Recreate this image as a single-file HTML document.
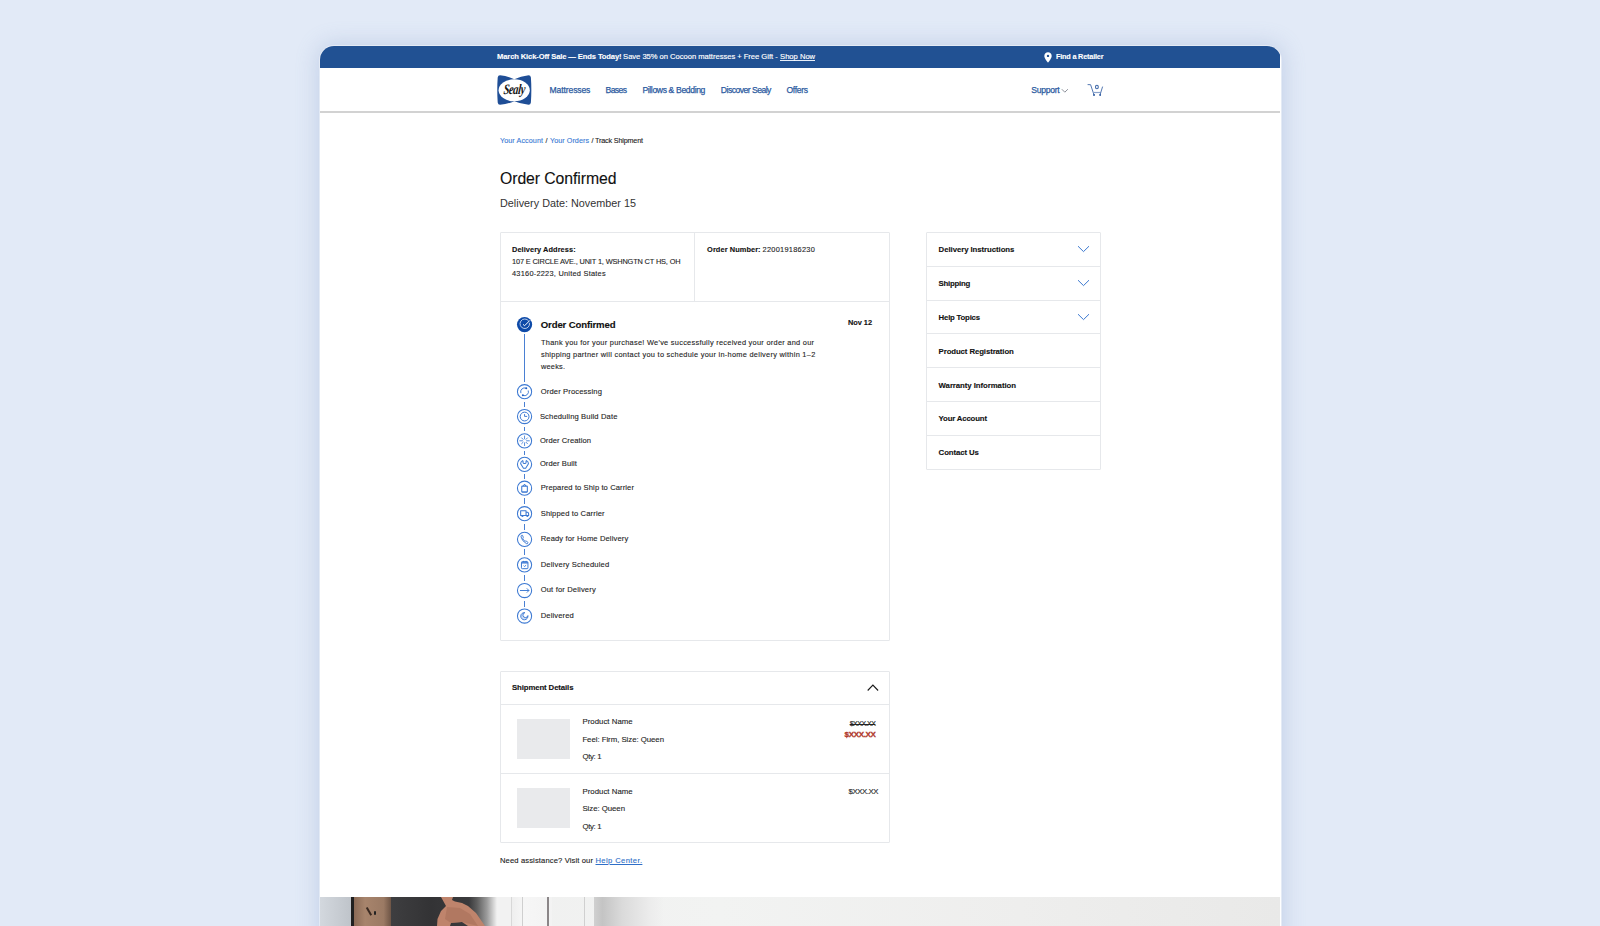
<!DOCTYPE html>
<html><head><meta charset="utf-8">
<style>
*{box-sizing:border-box;margin:0;padding:0}
html,body{width:1600px;height:926px;overflow:hidden}
body{background:#e2eaf7;font-family:"Liberation Sans",sans-serif;position:relative;color:#111}
.tx{position:absolute;white-space:nowrap;line-height:1.117;-webkit-text-stroke-width:0.12px}
.ab{position:absolute}
#frame{position:absolute;left:320px;top:46px;width:960.6px;height:900px;background:#fff;border-radius:14px 14px 0 0;overflow:hidden;box-shadow:0 0 0 1px rgba(255,255,255,.42),0 0 22px 2px rgba(120,145,195,.30)}
.bd{position:absolute;background:#e6e8eb}
</style></head>
<body>
<div id="frame">
  <div class="ab" style="left:0;top:0;width:960px;height:21.5px;background:#215193"></div>
  <div class="ab" style="left:0;top:65px;width:960px;height:1.8px;background:#d2d2d2"></div>
  <!-- bottom image -->
  <div class="ab" style="left:0;top:851px;width:960px;height:60px;background:linear-gradient(90deg,#eeeeee 0px,#f2f3f2 400px,#eeeeed 700px,#e9e9e8 960px)"></div>
  <div class="ab" style="left:0;top:851px;width:31px;height:60px;background:linear-gradient(90deg,#d3d8de,#bfc4ca)"></div>
  <div class="ab" style="left:31px;top:851px;width:3px;height:60px;background:#202020"></div>
  <div class="ab" style="left:34px;top:851px;width:37px;height:60px;background:linear-gradient(90deg,#8a6a56,#a7846c 30%,#9b7a64 80%,#6e5546)"></div>
  <div class="ab" style="left:48px;top:861px;width:1.5px;height:9px;background:#3a2a22;transform:rotate(-30deg)"></div>
  <div class="ab" style="left:54px;top:865px;width:2px;height:4px;background:#222;border-radius:1px"></div>
  <div class="ab" style="left:71px;top:851px;width:120px;height:60px;background:linear-gradient(90deg,#3e3e40 0px,#333335 40px,#3a3a3c 78px,#5e5e5e 86px,#9c9c9c 96px,#d8d8d8 103px,#f2f2f2 106px)"></div>
  <svg class="ab" style="left:0;top:851px" width="200" height="40" viewBox="0 0 200 40"><polygon points="121,0 133,0 132,3 135,4.5 142,6 148,9 156,16 165,29 148,29 142,25 131,26 130,29 117,29 117.5,22 121,14 126,9" fill="#bf846c"/><polygon points="127,10 140,11 150,17 158,29 142,25 131,26 125,22" fill="#a8705a" opacity="0.6"/></svg>
  <div class="ab" style="left:191px;top:851px;width:41px;height:60px;background:linear-gradient(90deg,#eeeeee,#f6f6f6 30%,#f3f3f3)"></div>
  <div class="ab" style="left:191px;top:851px;width:1px;height:60px;background:#d8d8d8"></div>
  <div class="ab" style="left:202px;top:851px;width:1px;height:60px;background:#cfcfcf"></div>
  <div class="ab" style="left:227px;top:851px;width:2px;height:60px;background:#8b8688"></div>
  <div class="ab" style="left:264px;top:851px;width:1px;height:60px;background:#d0d0d0"></div>
  <div class="ab" style="left:274px;top:851px;width:70px;height:60px;background:linear-gradient(90deg,#d0d0d0,#c4c4c4 12%,#dadada 40%,#ececec 80%,rgba(240,241,240,0))"></div>
</div>
<!-- logo -->
<svg class="ab" style="left:496px;top:74px" width="37" height="32" viewBox="0 0 37 32">
  <path d="M4,1.2 Q2,1.2 1.7,3.5 Q0.8,16 1.7,28.5 Q2,30.8 4,30.8 Q12,30 18.3,27.3 Q24.6,30 32.6,30.8 Q34.6,30.8 34.9,28.5 Q35.8,16 34.9,3.5 Q34.6,1.2 32.6,1.2 Q24.6,2 18.3,5.3 Q12,2 4,1.2 Z" fill="#1f4e96"/>
  <ellipse cx="18.2" cy="16.3" rx="15.6" ry="11" fill="#fff"/>
  <g transform="translate(17.8,20.2) scale(0.73,1) skewX(-8)"><text x="0" y="0" text-anchor="middle" font-family="Liberation Serif" font-style="italic" font-weight="bold" font-size="14.5" fill="#151515" style="letter-spacing:-0.6px">Sealy</text></g>
</svg>
<!-- pin -->
<svg class="ab" style="left:1043.5px;top:51.5px" width="8" height="11" viewBox="0 0 8 11">
  <path d="M4,0.3 C1.9,0.3 0.3,1.9 0.3,3.9 C0.3,6.3 4,10.6 4,10.6 C4,10.6 7.7,6.3 7.7,3.9 C7.7,1.9 6.1,0.3 4,0.3 Z" fill="#fff"/>
  <circle cx="4" cy="3.9" r="1.2" fill="#215193"/>
</svg>
<!-- support chevron -->
<svg class="ab" style="left:1061px;top:88px" width="8" height="6" viewBox="0 0 8 6"><path d="M0.8,1.2 L3.8,4.2 L6.9,1.2" fill="none" stroke="#80858f" stroke-width="0.9"/></svg>
<!-- cart -->
<svg class="ab" style="left:1087px;top:83px" width="17" height="14" viewBox="0 0 17 14">
  <path d="M0.6,1.6 L3.6,1.7 L6.9,11.6" fill="none" stroke="#4a70ad" stroke-width="0.95"/>
  <path d="M6.4,9.5 L13.5,9.5" stroke="#8aa3cc" stroke-width="1.2"/>
  <path d="M15.6,3.6 L13.2,11.4" fill="none" stroke="#4a70ad" stroke-width="0.95"/>
  <rect x="6.1" y="11" width="1.8" height="1.9" fill="#3d67a8"/><rect x="12.3" y="11" width="1.7" height="1.9" fill="#3d67a8"/>
  <ellipse cx="9.9" cy="4" rx="1.4" ry="1.8" fill="none" stroke="#3d67a8" stroke-width="1.1"/>
</svg>
<!-- card 1 -->
<div class="ab" style="left:499.5px;top:231.5px;width:390.5px;height:409px;border:1px solid #e6e8eb;border-radius:1px"></div>
<div class="bd" style="left:694px;top:232px;width:1px;height:69px"></div>
<div class="bd" style="left:500px;top:300.8px;width:389px;height:1px"></div>
<!-- sidebar -->
<div class="ab" style="left:926px;top:232px;width:175px;height:238px;border:1px solid #e6e8eb;border-radius:1px"></div>
<div class="bd" style="left:927px;top:265.6px;width:173px;height:1px"></div>
<div class="bd" style="left:927px;top:299.5px;width:173px;height:1px"></div>
<div class="bd" style="left:927px;top:333.4px;width:173px;height:1px"></div>
<div class="bd" style="left:927px;top:367.3px;width:173px;height:1px"></div>
<div class="bd" style="left:927px;top:401.2px;width:173px;height:1px"></div>
<div class="bd" style="left:927px;top:435.1px;width:173px;height:1px"></div>
<svg class="ab" style="left:1077px;top:245px" width="13" height="8" viewBox="0 0 13 8"><path d="M1,1.2 L6.5,6.6 L12,1.2" fill="none" stroke="#3a78d0" stroke-width="1"/></svg>
<svg class="ab" style="left:1077px;top:278.9px" width="13" height="8" viewBox="0 0 13 8"><path d="M1,1.2 L6.5,6.6 L12,1.2" fill="none" stroke="#3a78d0" stroke-width="1"/></svg>
<svg class="ab" style="left:1077px;top:312.8px" width="13" height="8" viewBox="0 0 13 8"><path d="M1,1.2 L6.5,6.6 L12,1.2" fill="none" stroke="#3a78d0" stroke-width="1"/></svg>
<!-- shipment -->
<div class="ab" style="left:499.5px;top:671px;width:390.5px;height:172px;border:1px solid #e6e8eb;border-radius:1px"></div>
<div class="bd" style="left:500px;top:704px;width:389px;height:1px"></div>
<div class="bd" style="left:500px;top:773px;width:389px;height:1px"></div>
<svg class="ab" style="left:866px;top:683px" width="13" height="9" viewBox="0 0 13 9"><path d="M1.7,7.5 L6.9,2.1 L12.1,7.5" fill="none" stroke="#1a1a1a" stroke-width="1.1"/></svg>
<div class="ab" style="left:517px;top:719.4px;width:53px;height:40px;background:#e9eaec"></div>
<div class="ab" style="left:517px;top:788.2px;width:53px;height:40px;background:#e9eaec"></div>
<div class="ab" style="left:780px;top:60.2px;width:35.2px;height:0.8px;background:#e8eef7"></div>
<div class="ab" style="left:524px;top:334px;width:1.3px;height:48px;background:#4a80d3"></div>
<div class="ab" style="left:524px;top:401.80px;width:1.3px;height:5.40px;background:#4a80d3"></div>
<div class="ab" style="left:524px;top:426.60px;width:1.3px;height:4.90px;background:#4a80d3"></div>
<div class="ab" style="left:524px;top:450.90px;width:1.3px;height:4.10px;background:#4a80d3"></div>
<div class="ab" style="left:524px;top:474.40px;width:1.3px;height:4.50px;background:#4a80d3"></div>
<div class="ab" style="left:524px;top:498.30px;width:1.3px;height:6.10px;background:#4a80d3"></div>
<div class="ab" style="left:524px;top:523.80px;width:1.3px;height:6.20px;background:#4a80d3"></div>
<div class="ab" style="left:524px;top:549.40px;width:1.3px;height:6.10px;background:#4a80d3"></div>
<div class="ab" style="left:524px;top:574.90px;width:1.3px;height:6.30px;background:#4a80d3"></div>
<div class="ab" style="left:524px;top:600.60px;width:1.3px;height:6.10px;background:#4a80d3"></div>
<svg class="ab" style="left:515px;top:315px" width="19" height="19" viewBox="0 0 19 19"><g transform="translate(0.55,0.55)"><circle cx="9" cy="9" r="7.6" fill="#0e4aa8"/><path d="M13.2,5.6 A4.75,4.75 0 1 0 13.9,7.3" fill="none" stroke="#dfe8f8" stroke-width="0.8"/><path d="M7.5,8.8 L9,10.2 L14.3,4.9" fill="none" stroke="#fff" stroke-width="1.0"/></g></svg>
<svg class="ab" style="left:515px;top:382px" width="19" height="19" viewBox="0 0 19 19"><g transform="translate(0.55,0.70)"><circle cx="9" cy="9" r="7.1" fill="none" stroke="#3b78d2" stroke-width="1.05"/><path d="M5.34,10.43 A3.9,3.9 0 0 1 10.65,5.57" fill="none" stroke="#3b78d2" stroke-width="0.95"/><path d="M12.66,7.77 A3.9,3.9 0 0 1 7.35,12.63" fill="none" stroke="#3b78d2" stroke-width="0.95"/><circle cx="10.7" cy="5.6" r="1.0" fill="#1f5fc4"/><circle cx="7.3" cy="12.6" r="1.0" fill="#1f5fc4"/></g></svg>
<svg class="ab" style="left:515px;top:407px" width="19" height="19" viewBox="0 0 19 19"><g transform="translate(0.55,0.50)"><circle cx="9" cy="9" r="7.1" fill="none" stroke="#3b78d2" stroke-width="1.05"/><circle cx="9.05" cy="9.05" r="4.4" fill="none" stroke="#3b78d2" stroke-width="1"/><path d="M9,6.6 V8.9 H11.6" fill="none" stroke="#3b78d2" stroke-width="0.95"/></g></svg>
<svg class="ab" style="left:515px;top:431px" width="19" height="19" viewBox="0 0 19 19"><g transform="translate(0.55,0.80)"><circle cx="9" cy="9" r="7.1" fill="none" stroke="#3b78d2" stroke-width="1.05"/><line x1="11.00" y1="9.00" x2="13.80" y2="9.00" stroke="#3b78d2" stroke-width="0.85" stroke-linecap="round"/><line x1="10.48" y1="10.48" x2="11.90" y2="11.90" stroke="#3b78d2" stroke-width="0.85" stroke-linecap="round"/><line x1="9.00" y1="11.00" x2="9.00" y2="13.80" stroke="#3b78d2" stroke-width="0.85" stroke-linecap="round"/><line x1="7.52" y1="10.48" x2="6.10" y2="11.90" stroke="#3b78d2" stroke-width="0.85" stroke-linecap="round"/><line x1="7.00" y1="9.00" x2="4.20" y2="9.00" stroke="#3b78d2" stroke-width="0.85" stroke-linecap="round"/><line x1="7.52" y1="7.52" x2="6.10" y2="6.10" stroke="#3b78d2" stroke-width="0.85" stroke-linecap="round"/><line x1="9.00" y1="7.00" x2="9.00" y2="4.20" stroke="#3b78d2" stroke-width="0.85" stroke-linecap="round"/><line x1="10.48" y1="7.52" x2="11.90" y2="6.10" stroke="#3b78d2" stroke-width="0.85" stroke-linecap="round"/></g></svg>
<svg class="ab" style="left:515px;top:455px" width="19" height="19" viewBox="0 0 19 19"><g transform="translate(0.55,0.30)"><circle cx="9" cy="9" r="7.1" fill="none" stroke="#3b78d2" stroke-width="1.05"/><path d="M7,5.3 L7.5,5.9 L7.5,7.3 Q7.5,8.1 8.3,8.1 L9.7,8.1 Q10.5,8.1 10.5,7.3 L10.5,5.9 L11,5.3 Q12.9,6.3 12.9,8.5 L10.1,12.9 L7.9,12.9 L5.1,8.5 Q5.1,6.3 7,5.3 Z" fill="none" stroke="#3b78d2" stroke-width="1.05" stroke-linejoin="round"/></g></svg>
<svg class="ab" style="left:515px;top:479px" width="19" height="19" viewBox="0 0 19 19"><g transform="translate(0.55,0.20)"><circle cx="9" cy="9" r="7.1" fill="none" stroke="#3b78d2" stroke-width="1.05"/><rect x="6.2" y="6.9" width="5.6" height="6" rx="0.5" fill="none" stroke="#3b78d2" stroke-width="1.05"/><path d="M7.7,6.9 L9,4.9 L10.3,6.9" fill="none" stroke="#3b78d2" stroke-width="1" stroke-linejoin="round"/><path d="M6.2,12.5 H11.8" stroke="#3b78d2" stroke-width="0.8" opacity="0.6"/></g></svg>
<svg class="ab" style="left:515px;top:504px" width="19" height="19" viewBox="0 0 19 19"><g transform="translate(0.55,0.70)"><circle cx="9" cy="9" r="7.1" fill="none" stroke="#3b78d2" stroke-width="1.05"/><path d="M5.1,6 H10.5 V10.8 H5.1 Z M10.5,7.6 H12 Q13.1,8 13.1,9.3 V10.8 H10.5" fill="none" stroke="#3b78d2" stroke-width="1.05" stroke-linejoin="round"/><circle cx="6.9" cy="11.3" r="1.05" fill="#3b78d2"/><circle cx="11.8" cy="11.3" r="1.05" fill="#3b78d2"/></g></svg>
<svg class="ab" style="left:515px;top:530px" width="19" height="19" viewBox="0 0 19 19"><g transform="translate(0.55,0.30)"><circle cx="9" cy="9" r="7.1" fill="none" stroke="#3b78d2" stroke-width="1.05"/><path d="M6.3,4.9 Q5.4,5.2 5.5,6.6 Q6.2,10.5 10.8,13.3 Q12.1,13.8 12.4,12.6 Q12.5,11.9 11.8,11.5 L10.6,10.8 Q10,10.5 9.5,11 Q7.8,10 7.2,8.4 Q7.8,7.8 7.7,7.2 L7.3,5.7 Q7.1,4.7 6.3,4.9 Z" fill="none" stroke="#3b78d2" stroke-width="0.95" stroke-linejoin="round"/></g></svg>
<svg class="ab" style="left:515px;top:555px" width="19" height="19" viewBox="0 0 19 19"><g transform="translate(0.55,0.80)"><circle cx="9" cy="9" r="7.1" fill="none" stroke="#3b78d2" stroke-width="1.05"/><rect x="5.9" y="5.9" width="6.5" height="7" rx="0.9" fill="none" stroke="#3b78d2" stroke-width="1"/><rect x="5.9" y="5.9" width="6.5" height="1.9" fill="#3b78d2" opacity="0.85"/><circle cx="7.9" cy="5.6" r="0.6" fill="#3b78d2"/><circle cx="10.5" cy="5.6" r="0.6" fill="#3b78d2"/><path d="M8,9.9 L8.9,10.7 L10.6,9.4" fill="none" stroke="#3b78d2" stroke-width="0.95"/></g></svg>
<svg class="ab" style="left:515px;top:581px" width="19" height="19" viewBox="0 0 19 19"><g transform="translate(0.55,0.50)"><circle cx="9" cy="9" r="7.1" fill="none" stroke="#3b78d2" stroke-width="1.05"/><path d="M4.4,9 H13.4 M11.3,6.9 L13.4,9 L11.3,11.1" fill="none" stroke="#3b78d2" stroke-width="0.95"/></g></svg>
<svg class="ab" style="left:515px;top:607px" width="19" height="19" viewBox="0 0 19 19"><g transform="translate(0.55,0.00)"><circle cx="9" cy="9" r="7.1" fill="none" stroke="#3b78d2" stroke-width="1.05"/><path d="M9.4,5.65 A3.6,3.6 0 1 0 12.35,8.57 A2.5,2.5 0 1 1 9.4,5.65 Z" fill="#3b78d2" fill-opacity="0.25" stroke="#3b78d2" stroke-width="0.95" stroke-linejoin="round"/></g></svg>
<div id="t0" class="tx" style="left:497px;top:53.42px;font-size:7.6px;font-weight:bold;color:#fff;letter-spacing:-0.124px;">March Kick-Off Sale — Ends Today!</div>
<div id="t1" class="tx" style="left:623.1px;top:53.42px;font-size:7.6px;font-weight:normal;color:#fff;letter-spacing:-0.022px;-webkit-text-stroke:0.15px #fff;">Save 35% on Cocoon mattresses + Free Gift -</div>
<div id="t2" class="tx" style="left:780.1px;top:53.42px;font-size:7.6px;font-weight:normal;color:#fff;letter-spacing:-0.006px;-webkit-text-stroke:0.15px #fff;">Shop Now</div>
<div id="t3" class="tx" style="left:1056px;top:53.49px;font-size:7.3px;font-weight:bold;color:#fff;letter-spacing:-0.199px;">Find a Retailer</div>
<div id="t4" class="tx" style="left:549.6px;top:86.12px;font-size:8.6px;font-weight:normal;color:#2b5aa0;letter-spacing:-0.136px;-webkit-text-stroke:0.25px #2b5aa0;">Mattresses</div>
<div id="t5" class="tx" style="left:605.6px;top:86.12px;font-size:8.6px;font-weight:normal;color:#2b5aa0;letter-spacing:-0.621px;-webkit-text-stroke:0.25px #2b5aa0;">Bases</div>
<div id="t6" class="tx" style="left:642.4px;top:86.12px;font-size:8.6px;font-weight:normal;color:#2b5aa0;letter-spacing:-0.362px;-webkit-text-stroke:0.25px #2b5aa0;">Pillows &amp; Bedding</div>
<div id="t7" class="tx" style="left:720.8px;top:86.12px;font-size:8.6px;font-weight:normal;color:#2b5aa0;letter-spacing:-0.516px;-webkit-text-stroke:0.25px #2b5aa0;">Discover Sealy</div>
<div id="t8" class="tx" style="left:786.4px;top:86.12px;font-size:8.6px;font-weight:normal;color:#2b5aa0;letter-spacing:-0.308px;-webkit-text-stroke:0.25px #2b5aa0;">Offers</div>
<div id="t9" class="tx" style="left:1031.3px;top:86.12px;font-size:8.6px;font-weight:normal;color:#2b5aa0;letter-spacing:-0.301px;-webkit-text-stroke:0.25px #2b5aa0;">Support</div>
<div id="t10" class="tx" style="left:500px;top:137.28px;font-size:7.2px;font-weight:normal;color:#3a7bd5;letter-spacing:0.082px;">Your Account</div>
<div id="t11" class="tx" style="left:545.5px;top:137.28px;font-size:7.2px;font-weight:normal;color:#262626;letter-spacing:0.000px;">/</div>
<div id="t12" class="tx" style="left:550px;top:137.28px;font-size:7.2px;font-weight:normal;color:#3a7bd5;letter-spacing:0.052px;">Your Orders</div>
<div id="t13" class="tx" style="left:591.5px;top:137.28px;font-size:7.2px;font-weight:normal;color:#222;letter-spacing:-0.163px;">/ Track Shipment</div>
<div id="t14" class="tx" style="left:500px;top:170.10px;font-size:15.8px;font-weight:normal;color:#111;letter-spacing:-0.081px;">Order Confirmed</div>
<div id="t15" class="tx" style="left:500px;top:196.63px;font-size:10.8px;font-weight:normal;color:#333;letter-spacing:0.015px;-webkit-text-stroke-width:0;">Delivery Date: November 15</div>
<div id="t16" class="tx" style="left:512px;top:246.00px;font-size:7.4px;font-weight:bold;color:#111;letter-spacing:0.064px;">Delivery Address:</div>
<div id="t17" class="tx" style="left:512px;top:258.10px;font-size:7.4px;font-weight:normal;color:#262626;letter-spacing:-0.158px;">107 E CIRCLE AVE., UNIT 1, WSHNGTN CT HS, OH</div>
<div id="t18" class="tx" style="left:512px;top:270.10px;font-size:7.4px;font-weight:normal;color:#262626;letter-spacing:0.236px;">43160-2223, United States</div>
<div id="t19" class="tx" style="left:707.1px;top:245.70px;font-size:7.4px;font-weight:bold;color:#111;letter-spacing:0.077px;">Order Number:</div>
<div id="t20" class="tx" style="left:762.5px;top:245.70px;font-size:7.4px;font-weight:normal;color:#262626;letter-spacing:0.266px;">220019186230</div>
<div id="t21" class="tx" style="left:540.8px;top:320.01px;font-size:9.6px;font-weight:bold;color:#111;letter-spacing:-0.147px;">Order Confirmed</div>
<div id="t22" class="tx" style="left:847.9px;top:319.20px;font-size:7.4px;font-weight:bold;color:#111;letter-spacing:-0.028px;">Nov 12</div>
<div id="t23" class="tx" style="left:541px;top:339.20px;font-size:7.4px;font-weight:normal;color:#262626;letter-spacing:0.269px;">Thank you for your purchase! We've successfully received your order and our</div>
<div id="t24" class="tx" style="left:541px;top:351.30px;font-size:7.4px;font-weight:normal;color:#262626;letter-spacing:0.275px;">shipping partner will contact you to schedule your in-home delivery within 1–2</div>
<div id="t25" class="tx" style="left:541px;top:363.10px;font-size:7.4px;font-weight:normal;color:#262626;letter-spacing:0.197px;">weeks.</div>
<div id="t26" class="tx" style="left:540.7px;top:388.12px;font-size:7.6px;font-weight:normal;color:#262626;letter-spacing:0.141px;">Order Processing</div>
<div id="t27" class="tx" style="left:539.9px;top:412.82px;font-size:7.6px;font-weight:normal;color:#262626;letter-spacing:0.139px;">Scheduling Build Date</div>
<div id="t28" class="tx" style="left:539.9px;top:436.92px;font-size:7.6px;font-weight:normal;color:#262626;letter-spacing:0.067px;">Order Creation</div>
<div id="t29" class="tx" style="left:539.9px;top:460.22px;font-size:7.6px;font-weight:normal;color:#262626;letter-spacing:0.061px;">Order Built</div>
<div id="t30" class="tx" style="left:540.7px;top:484.32px;font-size:7.6px;font-weight:normal;color:#262626;letter-spacing:0.095px;">Prepared to Ship to Carrier</div>
<div id="t31" class="tx" style="left:540.7px;top:509.92px;font-size:7.6px;font-weight:normal;color:#262626;letter-spacing:0.134px;">Shipped to Carrier</div>
<div id="t32" class="tx" style="left:540.7px;top:535.42px;font-size:7.6px;font-weight:normal;color:#262626;letter-spacing:0.122px;">Ready for Home Delivery</div>
<div id="t33" class="tx" style="left:540.7px;top:560.92px;font-size:7.6px;font-weight:normal;color:#262626;letter-spacing:0.181px;">Delivery Scheduled</div>
<div id="t34" class="tx" style="left:540.7px;top:586.42px;font-size:7.6px;font-weight:normal;color:#262626;letter-spacing:0.151px;">Out for Delivery</div>
<div id="t35" class="tx" style="left:540.7px;top:611.92px;font-size:7.6px;font-weight:normal;color:#262626;letter-spacing:0.129px;">Delivered</div>
<div id="t36" class="tx" style="left:938.6px;top:245.94px;font-size:7.8px;font-weight:bold;color:#111;letter-spacing:-0.067px;">Delivery Instructions</div>
<div id="t37" class="tx" style="left:938.6px;top:279.84px;font-size:7.8px;font-weight:bold;color:#111;letter-spacing:-0.250px;">Shipping</div>
<div id="t38" class="tx" style="left:938.6px;top:313.74px;font-size:7.8px;font-weight:bold;color:#111;letter-spacing:-0.212px;">Help Topics</div>
<div id="t39" class="tx" style="left:938.6px;top:347.64px;font-size:7.8px;font-weight:bold;color:#111;letter-spacing:-0.100px;">Product Registration</div>
<div id="t40" class="tx" style="left:938.6px;top:381.54px;font-size:7.8px;font-weight:bold;color:#111;letter-spacing:-0.061px;">Warranty Information</div>
<div id="t41" class="tx" style="left:938.6px;top:415.44px;font-size:7.8px;font-weight:bold;color:#111;letter-spacing:-0.168px;">Your Account</div>
<div id="t42" class="tx" style="left:938.6px;top:449.34px;font-size:7.8px;font-weight:bold;color:#111;letter-spacing:-0.094px;">Contact Us</div>
<div id="t43" class="tx" style="left:512px;top:684.14px;font-size:7.8px;font-weight:bold;color:#111;letter-spacing:-0.118px;">Shipment Details</div>
<div id="t44" class="tx" style="left:582.4px;top:718.44px;font-size:7.8px;font-weight:normal;color:#262626;letter-spacing:0.042px;">Product Name</div>
<div id="t45" class="tx" style="left:582.4px;top:735.64px;font-size:7.8px;font-weight:normal;color:#262626;letter-spacing:-0.033px;">Feel: Firm, Size: Queen</div>
<div id="t46" class="tx" style="left:582.4px;top:753.34px;font-size:7.8px;font-weight:normal;color:#262626;letter-spacing:-0.301px;">Qty: 1</div>
<div id="t47" class="tx" style="left:849.7px;top:720.16px;font-size:7.0px;font-weight:normal;color:#222;letter-spacing:-0.496px;"><s>$XXX.XX</s></div>
<div id="t48" class="tx" style="left:844.6px;top:731.06px;font-size:8.0px;font-weight:bold;color:#b0392c;letter-spacing:-0.342px;-webkit-text-stroke:0.3px #b0392c;">$XXX.XX</div>
<div id="t49" class="tx" style="left:582.4px;top:787.84px;font-size:7.8px;font-weight:normal;color:#262626;letter-spacing:0.042px;">Product Name</div>
<div id="t50" class="tx" style="left:582.4px;top:805.04px;font-size:7.8px;font-weight:normal;color:#262626;letter-spacing:-0.031px;">Size: Queen</div>
<div id="t51" class="tx" style="left:582.4px;top:822.94px;font-size:7.8px;font-weight:normal;color:#262626;letter-spacing:-0.301px;">Qty: 1</div>
<div id="t52" class="tx" style="left:848.5px;top:787.74px;font-size:7.8px;font-weight:normal;color:#262626;letter-spacing:-0.419px;">$XXX.XX</div>
<div id="t53" class="tx" style="left:500px;top:856.92px;font-size:7.6px;font-weight:normal;color:#222;letter-spacing:0.129px;">Need assistance? Visit our</div>
<div id="t54" class="tx" style="left:595.5px;top:856.92px;font-size:7.6px;font-weight:normal;color:#2f6fc8;letter-spacing:0.389px;"><u>Help Center.</u></div>
</body></html>
